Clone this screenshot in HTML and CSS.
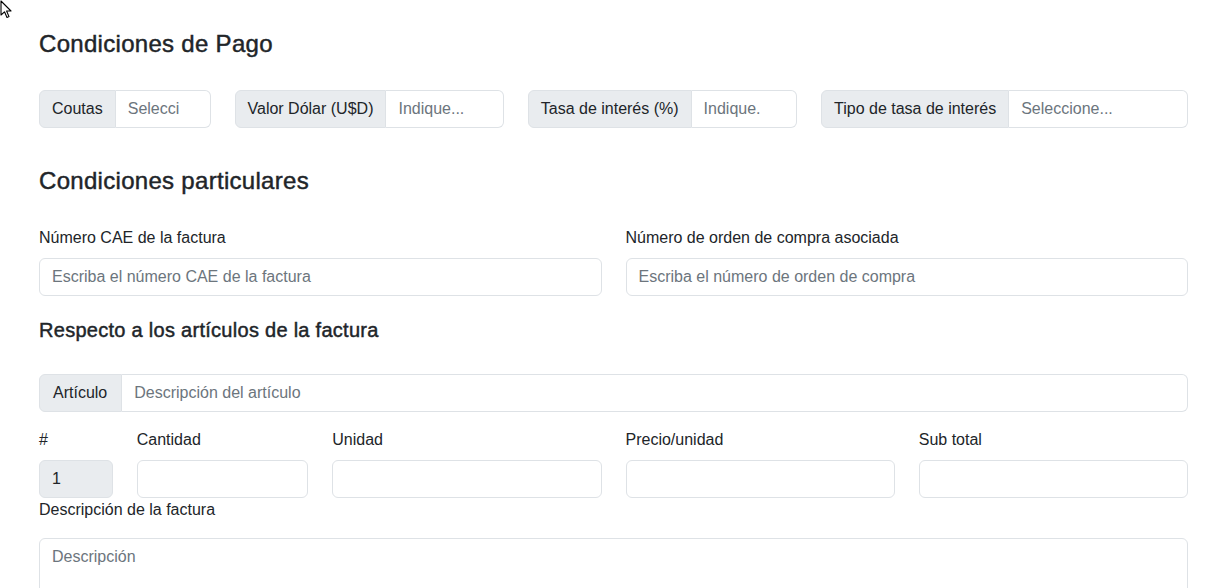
FILE: index.html
```html
<!DOCTYPE html>
<html lang="es">
<head>
<meta charset="utf-8">
<title>Condiciones</title>
<link rel="stylesheet" href="styles.css">
</head>
<body>
<svg class="cursor" width="14" height="20" viewBox="0 0 14 20" aria-hidden="true"><path d="M1 1 L1 15 L4.5 11.8 L7 17.5 L9 16.6 L6.6 11 L11 11 Z" fill="#fff" stroke="#000" stroke-width="1.1" stroke-linejoin="round"/></svg>
<main class="page">
  <h4 class="h4 first">Condiciones de Pago</h4>
  <div class="grid row-pago">
    <div class="igroup span2"><span class="igtext">Coutas</span><input class="ctrl" placeholder="Selecci"></div>
    <div class="igroup span3"><span class="igtext">Valor Dólar (U$D)</span><input class="ctrl" placeholder="Indique..."></div>
    <div class="igroup span3"><span class="igtext">Tasa de interés (%)</span><input class="ctrl" placeholder="Indique."></div>
    <div class="igroup span4"><span class="igtext">Tipo de tasa de interés</span><input class="ctrl" placeholder="Seleccione..."></div>
  </div>

  <h4 class="h4 second">Condiciones particulares</h4>
  <div class="grid row-part">
    <div class="span6">
      <label class="lbl">Número CAE de la factura</label>
      <input class="ctrl solo" placeholder="Escriba el número CAE de la factura">
    </div>
    <div class="span6">
      <label class="lbl">Número de orden de compra asociada</label>
      <input class="ctrl solo" placeholder="Escriba el número de orden de compra">
    </div>
  </div>

  <h5 class="h5">Respecto a los artículos de la factura</h5>
  <div class="igroup full"><span class="igtext art">Artículo</span><input class="ctrl" placeholder="Descripción del artículo"></div>

  <div class="grid row-items">
    <div class="span1"><label class="lbl">#</label><input class="ctrl solo disabled" value="1" disabled></div>
    <div class="span2"><label class="lbl">Cantidad</label><input class="ctrl solo"></div>
    <div class="span3"><label class="lbl">Unidad</label><input class="ctrl solo"></div>
    <div class="span3"><label class="lbl">Precio/unidad</label><input class="ctrl solo"></div>
    <div class="span3"><label class="lbl">Sub total</label><input class="ctrl solo"></div>
  </div>

  <label class="lbl desc-lbl">Descripción de la factura</label>
  <textarea class="ctrl solo area" placeholder="Descripción"></textarea>
</main>
</body>
</html>
```
FILE: styles.css
```css
* { box-sizing: border-box; }
html, body { margin: 0; padding: 0; background: #fff; }
body {
  font-family: "Liberation Sans", Arial, sans-serif;
  font-size: 16px;
  line-height: 1.5;
  color: #212529;
  overflow: hidden;
}
.cursor { position: absolute; left: 0; top: 0; }
.page { padding: 30px 39px 0 39px; }
.h4 {
  margin: 0;
  font-size: 24px;
  line-height: 1.2;
  font-weight: 400;
  letter-spacing: 0.3px;
  -webkit-text-stroke: 0.45px #212529;
}
.h4.first { margin-bottom: 31px; }
.h4.second { margin-top: 39px; margin-bottom: 30px; }
.h5 {
  margin: 22px 0 32px;
  font-size: 20px;
  line-height: 1.2;
  font-weight: 400;
  letter-spacing: 0.28px;
  -webkit-text-stroke: 0.45px #212529;
}
.grid {
  display: grid;
  grid-template-columns: repeat(12, 1fr);
  column-gap: 24px;
}
.span1 { grid-column: span 1; min-width: 0; }
.span2 { grid-column: span 2; min-width: 0; }
.span3 { grid-column: span 3; min-width: 0; }
.span4 { grid-column: span 4; min-width: 0; }
.span6 { grid-column: span 6; min-width: 0; }
.igroup { display: flex; align-items: stretch; min-width: 0; }
.igtext {
  display: flex;
  align-items: center;
  padding: 6px 12px;
  background: #e9ecef;
  border: 1px solid #dee2e6;
  border-radius: 6px 0 0 6px;
  white-space: nowrap;
  color: #212529;
}
.igtext.art { padding: 6px 14px 6px 13px; }
.ctrl {
  display: block;
  flex: 1 1 auto;
  min-width: 0;
  width: 100%;
  height: 38px;
  padding: 6px 12px;
  font-family: inherit;
  font-size: 16px;
  line-height: 1.5;
  color: #212529;
  background: #fff;
  border: 1px solid #dee2e6;
  border-left: 0;
  border-radius: 0 6px 6px 0;
  outline: none;
}
.ctrl::placeholder { color: #6c757d; opacity: 1; }
.ctrl.solo { border-left: 1px solid #dee2e6; border-radius: 6px; }
.ctrl.disabled { background: #e9ecef; color: #212529; -webkit-text-fill-color: #212529; opacity: 1; }
.lbl { display: block; margin-bottom: 8px; }
.row-items { margin-top: 16px; }
.desc-lbl { margin-bottom: 16px; }
.area { height: 90px; resize: none; }
```
